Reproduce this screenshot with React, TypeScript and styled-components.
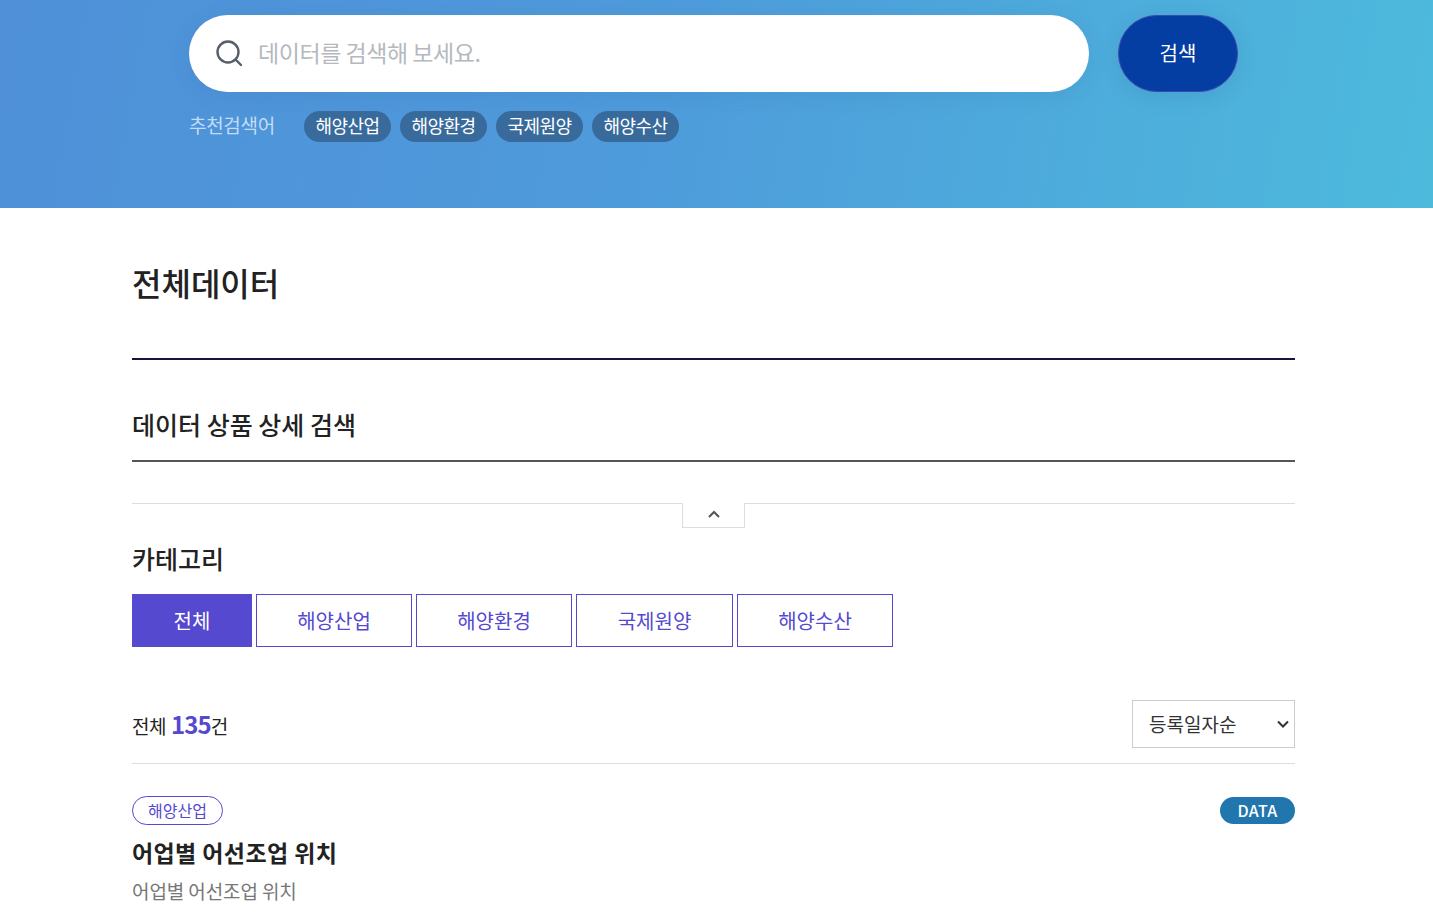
import styled, { createGlobalStyle } from "styled-components";

const GlobalStyle = createGlobalStyle`
  html, body {
    margin: 0;
    padding: 0;
    background: #fff;
    overflow: hidden;
  }
  body {
    font-family: "Noto Sans CJK KR", "Noto Sans", sans-serif;
    color: #222;
  }
  * {
    box-sizing: border-box;
  }
`;

const Hero = styled.section`
  height: 208px;
  padding: 15px 0 0 189px;
  background: linear-gradient(100deg, #4f90d8 0%, #4e9bdb 45%, #4dbadc 100%);
`;

const SearchRow = styled.div`
  display: flex;
  gap: 29px;
`;

const SearchBox = styled.div`
  width: 900px;
  height: 77px;
  padding-left: 26px;
  display: flex;
  align-items: center;
  gap: 15px;
  background: #fff;
  border-radius: 39px;
  box-shadow: 0 4px 20px rgba(40, 90, 150, 0.12);
`;

const SearchIcon = styled.svg`
  width: 28px;
  height: 28px;
  margin-bottom: 2px;
`;

const Placeholder = styled.span`
  font-size: 23px;
  line-height: 30px;
  padding-bottom: 3px;
  letter-spacing: -0.45px;
  color: #b5b9be;
`;

const SearchButton = styled.button`
  width: 120px;
  height: 77px;
  padding: 0 0 2px;
  border: 1px solid #3c47b4;
  border-radius: 39px;
  background: #053ea3;
  color: #fff;
  font-family: inherit;
  font-size: 20px;
  box-shadow: 0 4px 20px rgba(40, 90, 150, 0.18);
`;

const Keywords = styled.div`
  display: flex;
  align-items: center;
  margin-top: 19px;
`;

const KeywordLabel = styled.span`
  width: 115px;
  padding-bottom: 4px;
  font-size: 19px;
  letter-spacing: -0.3px;
  color: #c3dcf5;
`;

const KeywordList = styled.div`
  display: flex;
  gap: 9px;
`;

const Keyword = styled.span`
  width: 87px;
  height: 31px;
  padding-bottom: 4px;
  display: flex;
  align-items: center;
  justify-content: center;
  border-radius: 16px;
  background: #386b9b;
  color: #fff;
  font-size: 18px;
  letter-spacing: -0.6px;
`;

const Main = styled.main`
  width: 1163px;
  margin-left: 132px;
`;

const PageTitle = styled.h1`
  height: 152px;
  margin: 0;
  padding-top: 49px;
  border-bottom: 2px solid #14143c;
  font-size: 32px;
  line-height: 50px;
  font-weight: 500;
`;

const SectionTitle = styled.h2`
  height: 102px;
  margin: 0;
  padding-top: 46px;
  border-bottom: 2px solid #555;
  font-size: 25px;
  line-height: 36px;
  font-weight: 500;
`;

const Divider = styled.div`
  position: relative;
  margin-top: 41px;
  height: 1px;
  background: #ddd;
`;

const Toggle = styled.button`
  position: absolute;
  left: 550px;
  top: 0;
  width: 63px;
  height: 25px;
  padding: 0 0 2px;
  display: flex;
  align-items: center;
  justify-content: center;
  background: #fff;
  border: 1px solid #ddd;
  border-top: 0;
`;

const CategoryTitle = styled.h3`
  margin: 21px 0 0;
  font-size: 25px;
  line-height: 66px;
  height: 66px;
  font-weight: 500;
`;

const Tabs = styled.div`
  display: flex;
  gap: 4px;
  margin-top: 3px;
`;

const Tab = styled.button<{ $active?: boolean; $width: number }>`
  width: ${(p) => p.$width}px;
  height: 53px;
  padding: 0 0 1px;
  border: 1px solid #5549cf;
  background: ${(p) => (p.$active ? "#5549cf" : "#fff")};
  color: ${(p) => (p.$active ? "#fff" : "#5549cf")};
  font-family: inherit;
  font-size: 20px;
  font-weight: 400;
`;

const ListHead = styled.div`
  display: flex;
  justify-content: space-between;
  align-items: center;
  height: 64px;
  margin-top: 53px;
  padding-bottom: 16px;
  border-bottom: 1px solid #ddd;
`;

const Total = styled.div`
  font-size: 19px;
  letter-spacing: -0.5px;
  color: #222;
  strong {
    font-size: 24px;
    font-weight: 700;
    color: #5549cf;
    margin-left: 5px;
    letter-spacing: -0.9px;
  }
`;

const Sort = styled.div`
  width: 163px;
  height: 48px;
  padding: 0 5px 0 16px;
  display: flex;
  align-items: center;
  justify-content: space-between;
  border: 1px solid #ccc;
  font-size: 19px;
  color: #333;
`;

const Item = styled.article`
  padding-top: 32px;
`;

const ItemTop = styled.div`
  display: flex;
  justify-content: space-between;
  align-items: flex-start;
`;

const Category = styled.span`
  width: 91px;
  height: 29px;
  padding-bottom: 2px;
  display: flex;
  align-items: center;
  justify-content: center;
  border: 1px solid #5549cf;
  border-radius: 15px;
  font-size: 16px;
  color: #5549cf;
`;

const TypeBadge = styled.span`
  width: 75px;
  height: 27px;
  margin-top: 1px;
  padding-bottom: 2px;
  display: flex;
  align-items: center;
  justify-content: center;
  border-radius: 14px;
  background: #2177ad;
  color: #fff;
  font-size: 16px;
  font-weight: 500;
  letter-spacing: 0.3px;
`;

const ItemTitle = styled.h4`
  margin: 8px 0 0;
  font-size: 23px;
  line-height: 38px;
  font-weight: 700;
  letter-spacing: 0.4px;
  color: #222;
`;

const ItemDesc = styled.p`
  margin: 1px 0 0;
  font-size: 19px;
  line-height: 38px;
  letter-spacing: -0.1px;
  color: #777;
`;

const keywords = ["해양산업", "해양환경", "국제원양", "해양수산"];
const tabs = [
  { label: "전체", width: 120 },
  { label: "해양산업", width: 156 },
  { label: "해양환경", width: 156 },
  { label: "국제원양", width: 157 },
  { label: "해양수산", width: 156 },
];

export default function App() {
  return (
    <>
      <GlobalStyle />
      <Hero>
        <SearchRow>
          <SearchBox>
            <SearchIcon viewBox="0 0 28 28" fill="none" stroke="#555e69" strokeWidth="2.4">
              <circle cx="13" cy="13" r="10.5" />
              <path d="M20.5 20.5 L26 26" strokeLinecap="round" />
            </SearchIcon>
            <Placeholder>데이터를 검색해 보세요.</Placeholder>
          </SearchBox>
          <SearchButton>검색</SearchButton>
        </SearchRow>
        <Keywords>
          <KeywordLabel>추천검색어</KeywordLabel>
          <KeywordList>
            {keywords.map((k) => (
              <Keyword key={k}>{k}</Keyword>
            ))}
          </KeywordList>
        </Keywords>
      </Hero>
      <Main>
        <PageTitle>전체데이터</PageTitle>
        <SectionTitle>데이터 상품 상세 검색</SectionTitle>
        <Divider>
          <Toggle>
            <svg width="12" height="8" viewBox="0 0 12 8" fill="none" stroke="#555" strokeWidth="2">
              <path d="M1 7 L6 2 L11 7" />
            </svg>
          </Toggle>
        </Divider>
        <CategoryTitle>카테고리</CategoryTitle>
        <Tabs>
          {tabs.map((t, i) => (
            <Tab key={t.label} $active={i === 0} $width={t.width}>
              {t.label}
            </Tab>
          ))}
        </Tabs>
        <ListHead>
          <Total>
            전체<strong>135</strong>건
          </Total>
          <Sort>
            등록일자순
            <svg width="12" height="8" viewBox="0 0 12 8" fill="none" stroke="#333" strokeWidth="2">
              <path d="M1 1.5 L6 6.5 L11 1.5" />
            </svg>
          </Sort>
        </ListHead>
        <Item>
          <ItemTop>
            <Category>해양산업</Category>
            <TypeBadge>DATA</TypeBadge>
          </ItemTop>
          <ItemTitle>어업별 어선조업 위치</ItemTitle>
          <ItemDesc>어업별 어선조업 위치</ItemDesc>
        </Item>
      </Main>
    </>
  );
}
